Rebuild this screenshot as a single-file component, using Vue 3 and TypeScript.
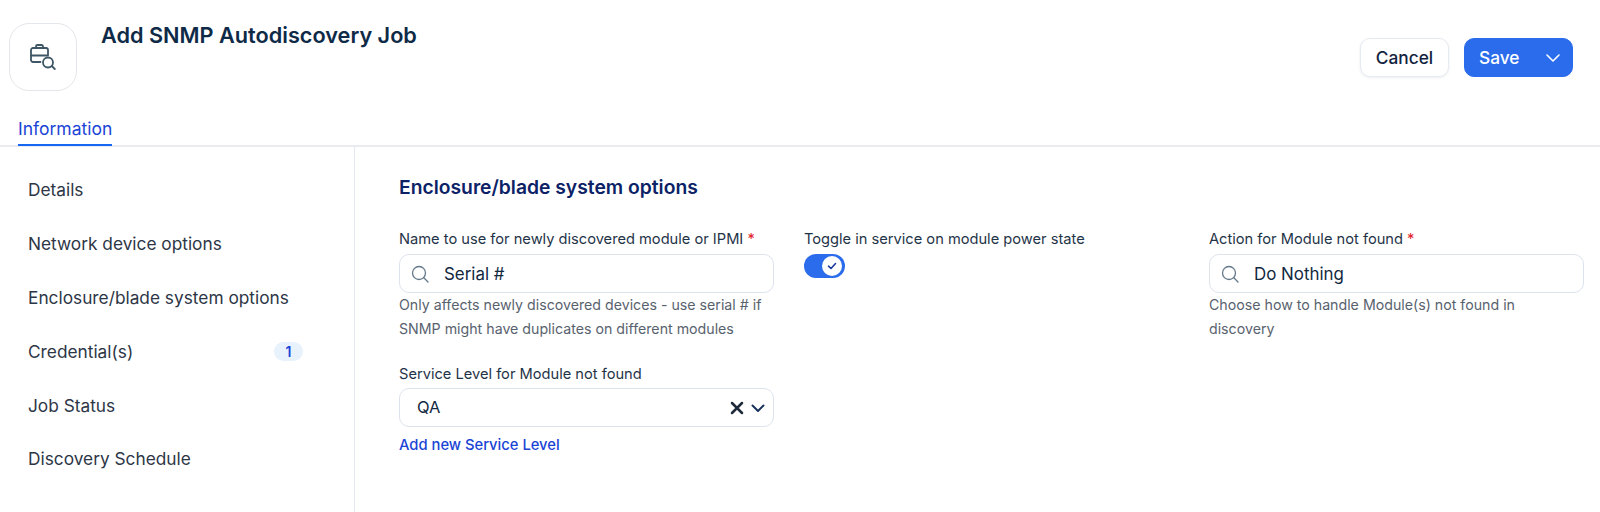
<script setup lang="ts">
const navItems = [
  { label: 'Details' },
  { label: 'Network device options' },
  { label: 'Enclosure/blade system options' },
  { label: 'Credential(s)', badge: 1 },
  { label: 'Job Status' },
  { label: 'Discovery Schedule' },
]
</script>

<template>
  <div class="page">
    <header class="header">
      <div class="logo-box">
        <svg width="28" height="28" viewBox="0 0 28 28" fill="none" stroke="#3f5665" stroke-width="1.8" stroke-linecap="round" stroke-linejoin="round">
          <path d="M11.500 19H4a2 2 0 0 1-2-2V7a2 2 0 0 1 2-2h13a2 2 0 0 1 2 2v4.500" />
          <path d="M7 5V3.500A1.500 1.500 0 0 1 8.500 2h4A1.500 1.500 0 0 1 14 3.500V5" />
          <path d="M2 12.500h17" />
          <circle cx="19" cy="19.500" r="5" />
          <path d="M22.800 23l3 3" />
        </svg>
      </div>
      <h1 class="title">Add SNMP Autodiscovery Job</h1>
      <div class="actions">
        <button class="btn-cancel">Cancel</button>
        <button class="btn-save">
          <span>Save</span>
          <svg width="16" height="16" viewBox="0 0 16 16" fill="none" stroke="#fff" stroke-width="1.600" stroke-linecap="round" stroke-linejoin="round">
            <path d="M2 5l6 6 6-6" />
          </svg>
        </button>
      </div>
    </header>

    <nav class="tabs">
      <span class="tab">Information</span>
    </nav>

    <div class="body">
      <aside class="sidebar">
        <div v-for="item in navItems" :key="item.label" class="nav-item">
          <span>{{ item.label }}</span>
          <span v-if="item.badge" class="badge">{{ item.badge }}</span>
        </div>
      </aside>

      <main class="content">
        <h2 class="section-title">Enclosure/blade system options</h2>
        <div class="grid">
          <div class="field">
            <label class="label">Name to use for newly discovered module or IPMI <em>*</em></label>
            <div class="input">
              <svg class="search" width="20" height="20" viewBox="0 0 20 20" fill="none" stroke="#64788a" stroke-width="1.300" stroke-linecap="round">
                <circle cx="9" cy="9" r="6.500" />
                <path d="M13.800 13.800l4.200 4.200" />
              </svg>
              <span>Serial #</span>
            </div>
            <p class="hint">Only affects newly discovered devices - use serial # if<br />SNMP might have duplicates on different modules</p>
          </div>

          <div class="field">
            <label class="label">Toggle in service on module power state</label>
            <div class="toggle">
              <span class="knob">
                <svg width="12" height="12" viewBox="0 0 12 12" fill="none" stroke="#1c3a9e" stroke-width="1.600" stroke-linecap="round" stroke-linejoin="round">
                  <path d="M2.500 6.200l2.500 2.300 4.500-5" />
                </svg>
              </span>
            </div>
          </div>

          <div class="field">
            <label class="label">Action for Module not found <em>*</em></label>
            <div class="input">
              <svg class="search" width="20" height="20" viewBox="0 0 20 20" fill="none" stroke="#64788a" stroke-width="1.300" stroke-linecap="round">
                <circle cx="9" cy="9" r="6.500" />
                <path d="M13.800 13.800l4.200 4.200" />
              </svg>
              <span>Do Nothing</span>
            </div>
            <p class="hint">Choose how to handle Module(s) not found in<br />discovery</p>
          </div>

          <div class="field second-row">
            <label class="label tight">Service Level for Module not found</label>
            <div class="input select">
              <span class="value">QA</span>
              <svg width="14" height="14" viewBox="0 0 14 14" fill="none" stroke="#1c2a3a" stroke-width="2.500" stroke-linecap="round">
                <path d="M2 2l10 10M12 2L2 12" />
              </svg>
              <svg width="14" height="14" viewBox="0 0 14 14" fill="none" stroke="#16305a" stroke-width="1.900" stroke-linecap="round" stroke-linejoin="round">
                <path d="M1.500 4.500L7 10l5.500-5.500" />
              </svg>
            </div>
            <a class="link">Add new Service Level</a>
          </div>
        </div>
      </main>
    </div>
  </div>
</template>

<style>
html,
body {
  margin: 0;
  background: #fff;
}
</style>

<style scoped>
.page {
  width: 1600px;
  height: 512px;
  overflow: hidden;
  font-family: Inter, "Liberation Sans", sans-serif;
  color: #0f2640;
  background: #fff;
}

.header {
  display: flex;
  align-items: flex-start;
  height: 117px;
  padding: 23px 27px 0 9px;
  box-sizing: border-box;
}

.logo-box {
  width: 68px;
  height: 68px;
  box-sizing: border-box;
  border: 1px solid #e3e6ea;
  border-radius: 20px;
  display: flex;
  align-items: center;
  justify-content: center;
}

.title {
  margin: 0 0 0 24px;
  font-size: 21.700px;
  line-height: 24px;
  font-weight: 600;
  color: #0e2a47;
}

.actions {
  margin-left: auto;
  margin-top: 15px;
  display: flex;
  align-items: center;
  gap: 15px;
}

button {
  font-family: inherit;
  font-size: 17.300px;
  font-weight: 500;
  border-radius: 10px;
  cursor: pointer;
}

.btn-cancel {
  width: 89px;
  height: 39px;
  padding: 0;
  background: #fff;
  border: 1px solid #e6eaf1;
  color: #12233f;
  box-shadow: 0 1px 3px rgba(20, 40, 80, 0.08);
}

.btn-save {
  width: 109px;
  height: 39px;
  padding: 0 11px 0 14px;
  background: #2a6cec;
  border: 1px solid #2a6cec;
  color: #fff;
  display: flex;
  align-items: center;
  justify-content: space-between;
}

.tabs {
  height: 28px;
  padding-left: 18px;
  border-bottom: 2px solid #e9ebf0;
  display: flex;
}

.tab {
  height: 27px;
  line-height: 24px;
  font-size: 17.500px;
  color: #1a44d6;
  border-bottom: 2px solid #1668f2;
}

.body {
  display: flex;
  height: 367px;
}

.sidebar {
  width: 355px;
  flex: none;
  box-sizing: border-box;
  padding: 16px 51px 0 28px;
  border-right: 1px solid #e4e8f0;
}

.nav-item {
  height: 53.800px;
  display: flex;
  align-items: center;
  justify-content: space-between;
  font-size: 17.300px;
  color: #2d3646;
}

.badge {
  width: 29px;
  height: 19px;
  border-radius: 10px;
  background: #e8f2fd;
  color: #1a44d6;
  font-size: 14px;
  font-weight: 600;
  line-height: 19px;
  text-align: center;
}

.content {
  flex: 1;
  padding: 29px 16px 0 44px;
}

.section-title {
  margin: 0 0 31px;
  font-size: 19.300px;
  line-height: 22px;
  font-weight: 600;
  color: #0c2266;
}

.grid {
  display: grid;
  grid-template-columns: repeat(3, 375px);
  column-gap: 30px;
}

.second-row {
  grid-column: 1;
  margin-top: 23px;
}

.label {
  display: block;
  font-size: 14.650px;
  line-height: 20px;
  margin-bottom: 5px;
  color: #1f3448;
}

.label.tight {
  margin-bottom: 4px;
}

.label em {
  color: #e0202a;
  font-style: normal;
}

.input {
  height: 39px;
  box-sizing: border-box;
  border: 1px solid #dde3ed;
  border-radius: 10px;
  display: flex;
  align-items: center;
  padding: 0 10px;
  font-size: 16.900px;
  color: #12283f;
}

.search {
  margin-right: 14px;
}

.hint {
  margin: 0;
  font-size: 14.200px;
  line-height: 24px;
  color: #58626e;
  white-space: nowrap;
}

.toggle {
  width: 41px;
  height: 24px;
  border-radius: 12px;
  background: #2a6cec;
  display: flex;
  align-items: center;
  justify-content: flex-end;
  padding-right: 3px;
  box-sizing: border-box;
}

.knob {
  width: 20px;
  height: 20px;
  border-radius: 50%;
  background: #fff;
  display: flex;
  align-items: center;
  justify-content: center;
}

.select {
  gap: 7px;
  padding: 0 8px 0 17px;
}

.value {
  flex: 1;
  font-size: 16.500px;
  line-height: 20px;
  margin-top: -2px;
}

.link {
  display: block;
  margin-top: 9px;
  font-size: 14.750px;
  line-height: 18px;
  font-weight: 500;
  color: #1a44d6;
}
</style>
